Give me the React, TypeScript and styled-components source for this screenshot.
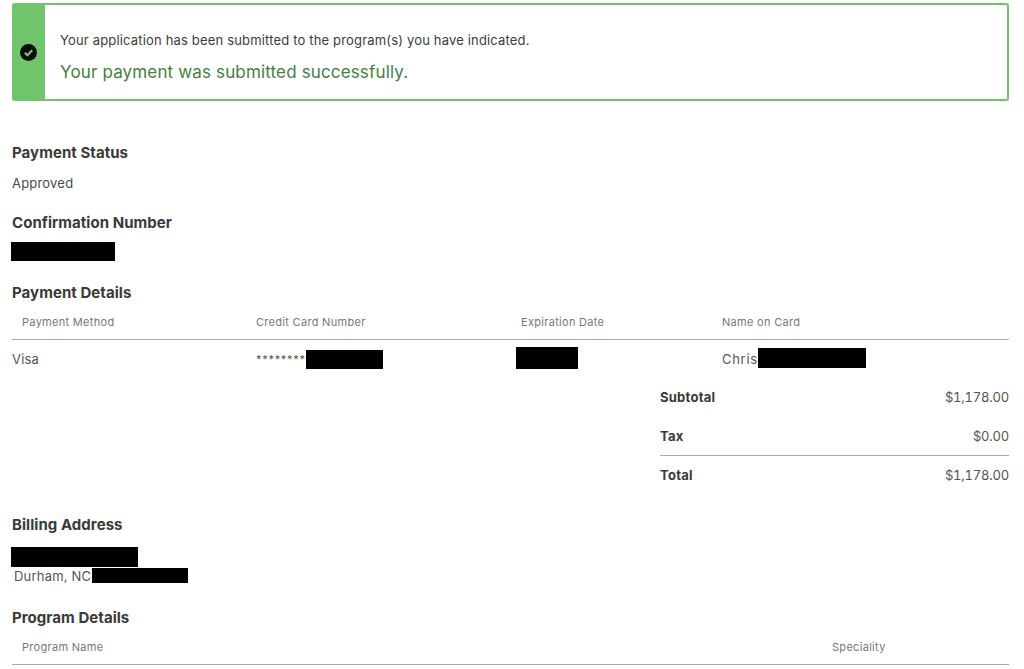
import React from "react"
import styled, { createGlobalStyle } from "styled-components"

const GlobalStyle = createGlobalStyle`
    html, body {
        margin: 0;
        padding: 0;
        background: #fff;
    }
    body {
        font-family: Inter, "Liberation Sans", sans-serif;
        color: #4a4a48;
    }
`

const Page = styled.div`
    width: 1024px;
    height: 669px;
    overflow: hidden;
    box-sizing: border-box;
    padding: 3px 15px 0 12px;
`

const Banner = styled.div`
    display: flex;
    height: 98px;
    box-sizing: border-box;
    border: 2px solid #70c46c;
    border-radius: 3px;
    margin-bottom: 43px;
`

const BannerSide = styled.div`
    width: 31px;
    flex-shrink: 0;
    box-sizing: border-box;
    padding-right: 2px;
    background: #70c46c;
    display: flex;
    align-items: center;
    justify-content: center;
`

const BannerBody = styled.div`
    padding: 26px 0 0 15px;
`

const BannerText = styled.div`
    font-size: 13px;
    line-height: 18px;
    letter-spacing: 0.17px;
    color: #3c3c3a;
`

const BannerSuccess = styled.div`
    margin-top: 13px;
    font-size: 17px;
    line-height: 20px;
    letter-spacing: 0.15px;
    color: #44803f;
`

const Heading = styled.h2<{ $gap: number }>`
    margin: 0 0 ${(props) => props.$gap}px;
    font-size: 15px;
    line-height: 18px;
    font-weight: 700;
    letter-spacing: 0.05px;
    color: #3a3a38;
`

const Section = styled.section<{ $gap: number }>`
    margin-bottom: ${(props) => props.$gap}px;
`

const Value = styled.div`
    font-size: 13px;
    line-height: 18px;
    letter-spacing: 0.2px;
`

const Redaction = styled.span<{ $w: number; $h: number; $shift?: number; $lift?: number }>`
    display: inline-block;
    flex-shrink: 0;
    width: ${(props) => props.$w}px;
    height: ${(props) => props.$h}px;
    margin-left: ${(props) => props.$shift ?? 0}px;
    margin-bottom: ${(props) => props.$lift ?? 0}px;
    background: #000;
    vertical-align: middle;
`

const Table = styled.div<{ $cols: string }>`
    display: grid;
    grid-template-columns: ${(props) => props.$cols};
`

const HeaderCell = styled.div`
    height: 33px;
    box-sizing: border-box;
    padding-top: 7px;
    font-size: 11px;
    line-height: 16px;
    letter-spacing: 0.3px;
    color: #77777a;
    border-bottom: 1px solid #a9a9a9;

    &:first-child {
        padding-left: 10px;
    }
`

const Cell = styled.div`
    height: 38px;
    display: flex;
    align-items: center;
    font-size: 13px;
    letter-spacing: 0.2px;
    color: #555;
    white-space: nowrap;
`

const CardName = styled.span`
    letter-spacing: 0.7px;
`

const Stars = styled.span`
    font-size: 11px;
    letter-spacing: 0.7px;
`

const Totals = styled.div`
    width: 349px;
    margin: 0 0 0 auto;
`

const TotalRow = styled.div<{ $line?: boolean; $h: number }>`
    display: flex;
    justify-content: space-between;
    align-items: center;
    height: ${(props) => props.$h}px;
    box-sizing: border-box;
    font-size: 13px;
    font-variant-numeric: tabular-nums;
    letter-spacing: -0.2px;
    color: #555;
    border-top: ${(props) => (props.$line ? "1px solid #a9a9a9" : "none")};
`

const TotalLabel = styled.span`
    font-weight: 700;
    letter-spacing: 0.25px;
    color: #3a3a38;
`

const AddressLine = styled.div`
    display: flex;
    align-items: center;
    height: 19px;
    font-size: 13px;
    letter-spacing: 0.2px;
    color: #555;
`

const AddressText = styled.span`
    padding: 0 2px;
`

export default function App() {
    return (
        <Page>
            <GlobalStyle />
            <Banner>
                <BannerSide>
                    <svg width="17" height="17" viewBox="0 0 17 17">
                        <circle cx="8.5" cy="8.5" r="8.5" fill="#0c0c0c" />
                        <path d="M4.8 8.8l2.6 2.5 4.8-5" fill="none" stroke="#7ccb77" strokeWidth="2" />
                    </svg>
                </BannerSide>
                <BannerBody>
                    <BannerText>Your application has been submitted to the program(s) you have indicated.</BannerText>
                    <BannerSuccess>Your payment was submitted successfully.</BannerSuccess>
                </BannerBody>
            </Banner>

            <Section $gap={22}>
                <Heading $gap={12}>Payment Status</Heading>
                <Value>Approved</Value>
            </Section>

            <Section $gap={23}>
                <Heading $gap={10}>Confirmation Number</Heading>
                <AddressLine>
                    <Redaction $w={104} $h={19} $shift={-1} />
                </AddressLine>
            </Section>

            <Section $gap={0}>
                <Heading $gap={5}>Payment Details</Heading>
                <Table $cols="244px 265px 201px 287px">
                    <HeaderCell>Payment Method</HeaderCell>
                    <HeaderCell>Credit Card Number</HeaderCell>
                    <HeaderCell>Expiration Date</HeaderCell>
                    <HeaderCell>Name on Card</HeaderCell>
                    <Cell>Visa</Cell>
                    <Cell>
                        <Stars>********</Stars>
                        <Redaction $w={77} $h={19} />
                    </Cell>
                    <Cell>
                        <Redaction $w={62} $h={22} $shift={-5} $lift={2} />
                    </Cell>
                    <Cell>
                        <CardName>Chris</CardName>
                        <Redaction $w={108} $h={20} $lift={3} />
                    </Cell>
                </Table>
            </Section>

            <Section $gap={22}>
                <Totals>
                    <TotalRow $h={38}>
                        <TotalLabel>Subtotal</TotalLabel>
                        <span>$1,178.00</span>
                    </TotalRow>
                    <TotalRow $h={39}>
                        <TotalLabel>Tax</TotalLabel>
                        <span>$0.00</span>
                    </TotalRow>
                    <TotalRow $line $h={39}>
                        <TotalLabel>Total</TotalLabel>
                        <span>$1,178.00</span>
                    </TotalRow>
                </Totals>
            </Section>

            <Section $gap={24}>
                <Heading $gap={13}>Billing Address</Heading>
                <AddressLine>
                    <Redaction $w={127} $h={20} $shift={-1} />
                </AddressLine>
                <AddressLine>
                    <AddressText>Durham, NC</AddressText>
                    <Redaction $w={96} $h={15} $shift={-1} />
                </AddressLine>
            </Section>

            <Section $gap={0}>
                <Heading $gap={5}>Program Details</Heading>
                <Table $cols="820px 177px">
                    <HeaderCell>Program Name</HeaderCell>
                    <HeaderCell>Speciality</HeaderCell>
                </Table>
            </Section>
        </Page>
    )
}
